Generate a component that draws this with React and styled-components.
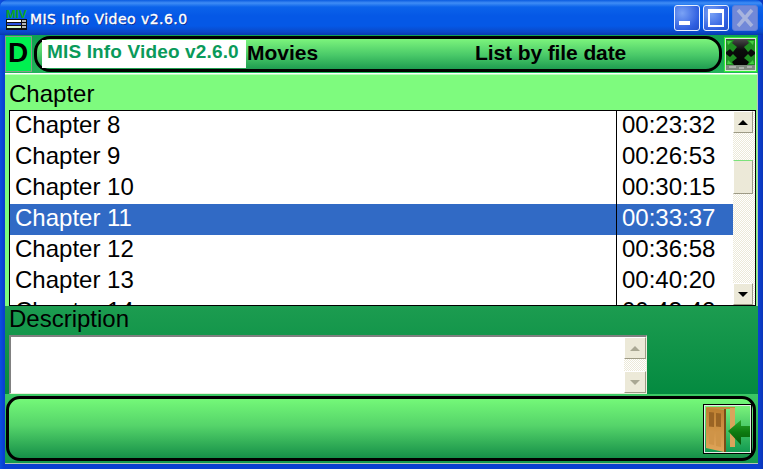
import React from 'react';
import styled, { createGlobalStyle } from 'styled-components';

const Global = createGlobalStyle`
  html, body { margin: 0; padding: 0; width: 763px; height: 469px; overflow: hidden; background: #0a3fd0; }
  * { box-sizing: border-box; }
`;
const Win = styled.div`
  width: 763px; height: 469px; display: flex; flex-direction: column;
  background: linear-gradient(90deg,#0a50e0 0,#0a3fd0 4px,#0a3fd0 759px,#0a35b8 763px);
  font-family: "Liberation Sans", Arial, sans-serif; overflow: hidden;
`;
const TitleBar = styled.div`
  height: 35px; flex: none; display: flex; align-items: center; padding: 2px 5px 0 6px;
  background: linear-gradient(180deg,#0a5be0 0,#3f8df5 3px,#0b63ea 7px,#0558e6 16px,#0558e6 26px,#0a49c8 32px,#0838b0 35px);
  border-radius: 7px 7px 0 0;
`;
const TitleText = styled.div`
  margin-left: 3px; color: #fff; font-size: 14px; letter-spacing: .45px;
  font-family: "DejaVu Sans", sans-serif; -webkit-text-stroke: .4px #fff;
  text-shadow: 1px 1px 0 #0a2a90; margin-top: 1px;
`;
const Controls = styled.div` margin-left: auto; display: flex; gap: 3px; margin-top: -2px;`;
const Ctl = styled.div`
  width: 26px; height: 26px; border-radius: 3px; border: 1px solid ${p => p.$off ? '#5d7fd8' : '#e8f0ff'};
  background: ${p => p.$off ? '#7188d8' : 'radial-gradient(circle at 30% 30%,#7aa2f5,#2f5fe0 70%,#2450c8)'};
  display: flex; align-items: center; justify-content: center;
`;
const Content = styled.div`
  flex: 1; margin: 0 5px 5px 5px; display: flex; flex-direction: column; min-height: 0;
  background: #1a9a4e; border-bottom: 1px solid #b4c4b4;
`;
const TopRow = styled.div`
  height: 38px; flex: none; display: flex; align-items: center; gap: 2px; padding-right: 1px;
  background: linear-gradient(180deg,#10a050,#22b45a);
`;
const DBtn = styled.div`
  width: 27px; height: 36px; background: #00f050; border: 1px solid #8a9a8a; color: #000;
  font-size: 28px; font-weight: 700; display: flex; align-items: center; justify-content: center;
  flex: none; padding: 0 1px 2px 0;
`;
const HeaderPill = styled.div`
  width: 688px; height: 36px; flex: none; border: 3px solid #000; border-radius: 16px; display: flex; align-items: center;
  background: linear-gradient(180deg,#7cf47c 0,#48c868 55%,#1f9c50 100%);
  font-size: 21px; font-weight: 700; color: #000; padding-left: 5px;
`;
const AppName = styled.div`
  width: 204px; height: 28px; background: #fff; color: #0a9a5a; display: flex; align-items: center;
  padding: 0 0 4px 5px; font-size: 19px; letter-spacing: .15px; flex: none;
`;
const Section = styled.span` margin-left: 1px; padding-bottom: 3px; width: 228px; flex: none;`;
const Sort = styled.span` padding-bottom: 3px; letter-spacing: -.1px;`;
const ExitTop = styled.div`
  width: 33px; height: 35px; border: 1px solid #33f033; outline: 1px solid #d8ead8; outline-offset: -2px; flex: none;
  background: #0a0a0a; display: flex; align-items: center; justify-content: center;
`;
const Upper = styled.div`
  height: 233px; flex: none; display: flex; flex-direction: column; padding: 0 4px;
  background: linear-gradient(180deg,#fff 0,#fff 1px,#7efb7e 2px);
  border-right: 1px solid #b8c8b8;
`;
const Label = styled.div`
  font-size: 24px; color: #000; line-height: 26px; height: ${p => p.$h}px; padding-top: ${p => p.$t || 0}px;
`;
const ListBox = styled.div`
  height: 196px; width: 747px; border: 1px solid #000; background: #fff; display: flex; overflow: hidden; flex: none;
`;
const Rows = styled.div` flex: 1; min-width: 0; overflow: hidden;`;
const Row = styled.div`
  height: 31px; display: flex; font-size: 24px; line-height: 27px;
  background: ${p => p.$sel ? '#316ac5' : '#fff'}; color: ${p => p.$sel ? '#fff' : '#000'};
`;
const Name = styled.div` width: 607px; padding-left: 5px; border-right: 1px solid #000; flex: none;`;
const Time = styled.div` padding-left: 5px;`;
const Scroll = styled.div`
  width: ${p => p.$w}px; flex: none; display: flex; flex-direction: column;
  background: repeating-conic-gradient(#ece9d8 0 25%, #fff 0 50%) 0 0 / 2px 2px;
`;
const Arrow = styled.div`
  height: 22px; width: ${p => p.$aw || 20}px; flex: none; background: #ece9d8; display: flex; align-items: center; justify-content: center;
  border: 1px solid; border-color: #fff #9d9a85 #9d9a85 #fff; margin-top: ${p => p.$end ? 'auto' : 0};
  &::after {
    content: ''; border-left: 5px solid transparent; border-right: 5px solid transparent;
    ${p => p.$down ? 'border-top' : 'border-bottom'}: 5px solid ${p => p.$dim ? '#a9a793' : '#000'};
  }
`;
const Thumb = styled.div`
  height: 34px; width: 20px; margin-top: 27px; background: #ece9d8; flex: none;
  border: 1px solid; border-color: #7be27b #9d9a85 #9d9a85 #fff;
`;
const Lower = styled.div`
  height: 88px; flex: none; padding: 0 0 0 4px; display: flex; flex-direction: column;
  background: linear-gradient(180deg,#1c9c50,#048a40);
`;
const DescBox = styled.div`
  width: 638px; height: 59px; display: flex; background: #fff; flex: none;
  border: 1px solid; border-color: #808080 #f0f0e0 #e8f0d8 #808080; border-width: 2px 1px 1px 2px;
`;
const DescText = styled.div` flex: 1;`;
const Footer = styled.div`
  flex: 1; min-height: 0; padding: 2px 0 0 1px; background: linear-gradient(180deg,#3cc864,#14994e);
`;
const FooterPill = styled.div`
  height: 65px; width: 750px; border: 3px solid #000; border-radius: 14px; display: flex; align-items: center; justify-content: flex-end;
  padding-right: 1px; background: linear-gradient(180deg,#74f878 0,#55d46a 45%,#158f48 100%);
`;
const DoorBtn = styled.div`
  width: 49px; height: 50px; border: 1px solid #000; display: flex;
  background: linear-gradient(180deg,#7cf47c,#0f9850);
`;

const rows = [
  ['Chapter 8','00:23:32'],['Chapter 9','00:26:53'],['Chapter 10','00:30:15'],
  ['Chapter 11','00:33:37',true],['Chapter 12','00:36:58'],['Chapter 13','00:40:20'],['Chapter 14','00:43:42'],
];

const AppIcon = () => (
  <svg width="21" height="21" viewBox="0 0 21 21" style={{ marginTop: 3 }}>
    <text x="0" y="8" fontFamily="Liberation Sans" fontWeight="700" fontSize="10" textLength="21" lengthAdjust="spacingAndGlyphs" fill="#10a820">MIV</text>
    <rect x="0" y="9" width="21" height="11" fill="#111"/>
    <rect x="1" y="10" width="14" height="2" fill="#fff"/>
    <rect x="1" y="13" width="14" height="2" fill="#2a50e0"/>
    <rect x="1" y="16" width="14" height="2" fill="#d8f8c8"/>
    <path d="M16 11h4M16 14h4M16 17h4" stroke="#eee" strokeWidth="1.400"/>
  </svg>
);
const ExitIcon = () => (
  <svg width="29" height="31" viewBox="0 0 29 31">
    <defs>
      <linearGradient id="c" x1="0" y1="0" x2="0" y2="1">
        <stop offset="0" stopColor="#4a4a4a"/><stop offset=".35" stopColor="#0c0c0c"/><stop offset="1" stopColor="#000"/>
      </linearGradient>
    </defs>
    <rect width="29" height="31" fill="url(#c)"/>
    <path d="M0 1h8l-2 3 5 4-4 5-3-3-4 3z" fill="#1f8f22"/>
    <path d="M29 1h-8l2 3-5 4 4 5 3-3 4 3z" fill="#1f8f22"/>
    <path d="M0 26h8l-2-3 5-4-4-4-3 3-4-3z" fill="#1f8f22"/>
    <path d="M29 26h-8l2-3-5-4 4-4 3 3 4-3z" fill="#1f8f22"/>
    <path d="M1 2h5L2 6zM28 2h-5l4 4zM1 25h5l-4-4zM28 25h-5l4-4z" fill="#45cc42"/>
    <rect y="26" width="29" height="5" fill="#7f8a7f"/>
    <path d="M3 28h7M13 29h5M21 28h5" stroke="#d8d8d8" strokeWidth="1"/>
  </svg>
);
const DoorIcon = () => (
  <svg width="47" height="48" viewBox="0 0 47 48">
    <defs>
      <linearGradient id="d" x1="0" y1="0" x2="0" y2="1">
        <stop offset="0" stopColor="#bd7f30"/><stop offset="1" stopColor="#e0a55a"/>
      </linearGradient>
      <linearGradient id="a" x1="0" y1="0" x2="0" y2="1">
        <stop offset="0" stopColor="#2aa82a"/><stop offset=".5" stopColor="#0d7a10"/><stop offset="1" stopColor="#07580a"/>
      </linearGradient>
    </defs>
    <rect x="0" y="0" width="47" height="48" fill="none" stroke="#e4ece4" strokeWidth="2"/>
    <path d="M2 2h29v2H2z" fill="#c48a3e"/>
    <path d="M26 3h5v39h-5z" fill="#d9a45c"/>
    <path d="M2 3l18 1.500V47L2 43z" fill="url(#d)"/>
    <path d="M20 4h2v43h-2z" fill="#7a4c18"/>
    <path d="M5 7l5 .5V22l-5-.5zM12 8l5 .5V22l-5-.5z" fill="#9a6424"/>
    <path d="M5 25l5 .5V40l-5-1zM12 26l5 .5V42l-5-1z" fill="#cf9448"/>
    <path d="M24 26l13-11v6h9v11h-9v8z" fill="url(#a)"/>
  </svg>
);

export default function App() {
  return (
    <Win>
      <Global />
      <TitleBar>
        <AppIcon />
        <TitleText>MIS Info Video v2.6.0</TitleText>
        <Controls>
          <Ctl><svg width="24" height="24" viewBox="0 0 24 24"><rect x="4" y="15" width="11" height="4" fill="#fff"/></svg></Ctl>
          <Ctl><svg width="24" height="24" viewBox="0 0 24 24"><path d="M4 3h16v18H4z M6 7v12h12V7z" fill="#fff" fillRule="evenodd"/></svg></Ctl>
          <Ctl $off><svg width="24" height="24" viewBox="0 0 24 24"><path d="M5 4l14 16M19 4L5 20" stroke="#a8b4de" strokeWidth="3.500"/></svg></Ctl>
        </Controls>
      </TitleBar>
      <Content>
        <TopRow>
          <DBtn>D</DBtn>
          <HeaderPill>
            <AppName>MIS Info Video v2.6.0</AppName>
            <Section>Movies</Section>
            <Sort>List by file date</Sort>
          </HeaderPill>
          <ExitTop><ExitIcon /></ExitTop>
        </TopRow>
        <Upper>
          <Label $h={37} $t={8}>Chapter</Label>
          <ListBox>
            <Rows>
              {rows.map(([n, t, s]) => (
                <Row key={n} $sel={s}><Name>{n}</Name><Time>{t}</Time></Row>
              ))}
            </Rows>
            <Scroll $w={22}>
              <Arrow />
              <Thumb />
              <Arrow $down $end />
            </Scroll>
          </ListBox>
        </Upper>
        <Lower>
          <Label $h={29} $t={0}>Description</Label>
          <DescBox>
            <DescText />
            <Scroll $w={22}>
              <Arrow $dim $aw={22} />
              <Arrow $dim $aw={22} $down $end />
            </Scroll>
          </DescBox>
        </Lower>
        <Footer>
          <FooterPill>
            <DoorBtn><DoorIcon /></DoorBtn>
          </FooterPill>
        </Footer>
      </Content>
    </Win>
  );
}
